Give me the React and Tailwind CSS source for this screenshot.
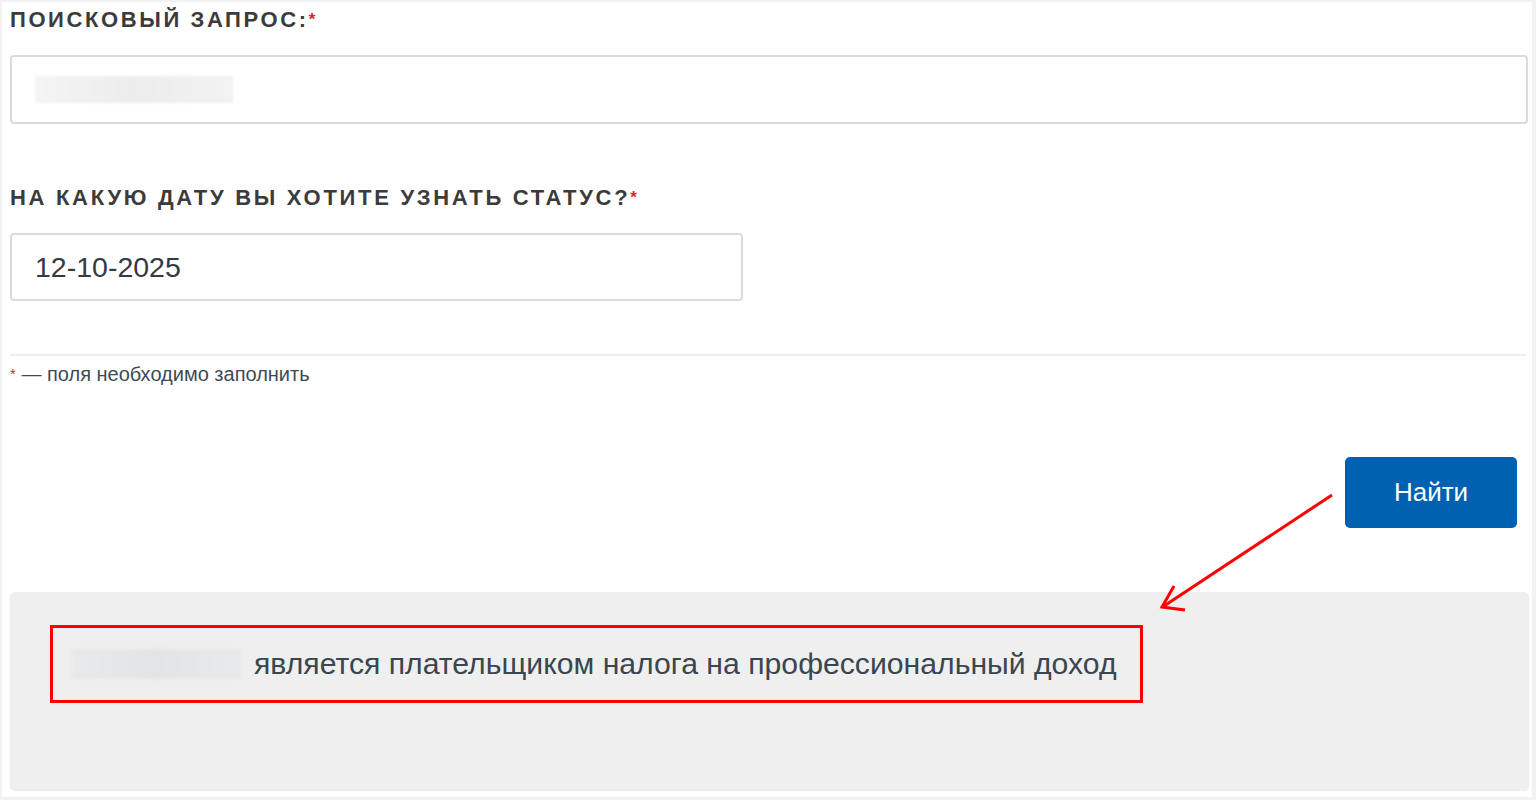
import React from "react";

export default function App() {
  return (
    <div className="relative w-[1536px] h-[800px] overflow-hidden bg-white border-t-2 border-l-2 border-r-[4px] border-b-[3px] border-[#f2f2f2]" style={{ fontFamily: '"Liberation Sans", Arial, sans-serif' }}>
      <div className="pl-[8px] pr-[5px]">
        <div className="pt-[6px] h-[30px] text-[22px] leading-[24px] font-bold tracking-[2.6px] text-[#3b3b3b]">
          ПОИСКОВЫЙ ЗАПРОС:<span className="text-[#e8222b] text-[17px] align-top tracking-normal">*</span>
        </div>
        <div className="mt-[23px] h-[69px] w-[1518px] rounded-[4px] border-2 border-[#d7dbe0] flex items-center pl-[23px]">
          <div className="w-[198px] h-[27px] bg-gradient-to-r from-[#f4f4f4] via-[#ececec] to-[#f2f2f2] blur-[1.5px]" />
        </div>
        <div className="mt-[62px] h-[30px] text-[22px] leading-[24px] font-bold tracking-[2.7px] text-[#3b3b3b]">
          НА КАКУЮ ДАТУ ВЫ ХОТИТЕ УЗНАТЬ СТАТУС?<span className="text-[#e8222b] text-[17px] align-top tracking-normal">*</span>
        </div>
        <div className="mt-[17px] h-[68px] w-[733px] rounded-[4px] border-2 border-[#d7dbe0] flex items-center pl-[23px] text-[28.5px] text-[#333a42]">
          12-10-2025
        </div>
        <div className="mt-[53px] h-[2px] bg-[#eeeeee]" />
        <div className="mt-[7px] text-[20px] leading-[22px] text-[#3e4a56]">
          <span className="text-[#e8222b] text-[15px] align-top">*</span> — поля необходимо заполнить
        </div>
        <div className="mt-[72px] flex justify-end pr-[10px]">
          <div className="w-[172px] h-[71px] rounded-[5px] bg-[#0061b0] text-white text-[26px] flex items-center justify-center">
            Найти
          </div>
        </div>
        <div className="mt-[64px] w-[1519px] h-[198px] rounded-[5px] bg-[#efefef] shadow-[0_1px_1px_rgba(0,0,0,0.08)] pt-[33px] pl-[40px]">
          <div className="w-[1093px] h-[78px] border-[3px] border-[#ff0000] flex items-center pl-[19px]">
            <div className="w-[169px] h-[30px] bg-gradient-to-r from-[#e8e9ea] via-[#e2e4e6] to-[#e8e9ea] blur-[1.5px]" />
            <span className="ml-[13px] text-[30.2px] text-[#3a4650]">является плательщиком налога на профессиональный доход</span>
          </div>
        </div>
      </div>
      <svg className="absolute left-0 top-0 pointer-events-none" width="1536" height="800">
        <line x1="1330" y1="493" x2="1162" y2="604" stroke="#ff0000" strokeWidth="3" />
        <polyline points="1172,584 1160,605 1183,608" fill="none" stroke="#ff0000" strokeWidth="3" />
      </svg>
    </div>
  );
}
